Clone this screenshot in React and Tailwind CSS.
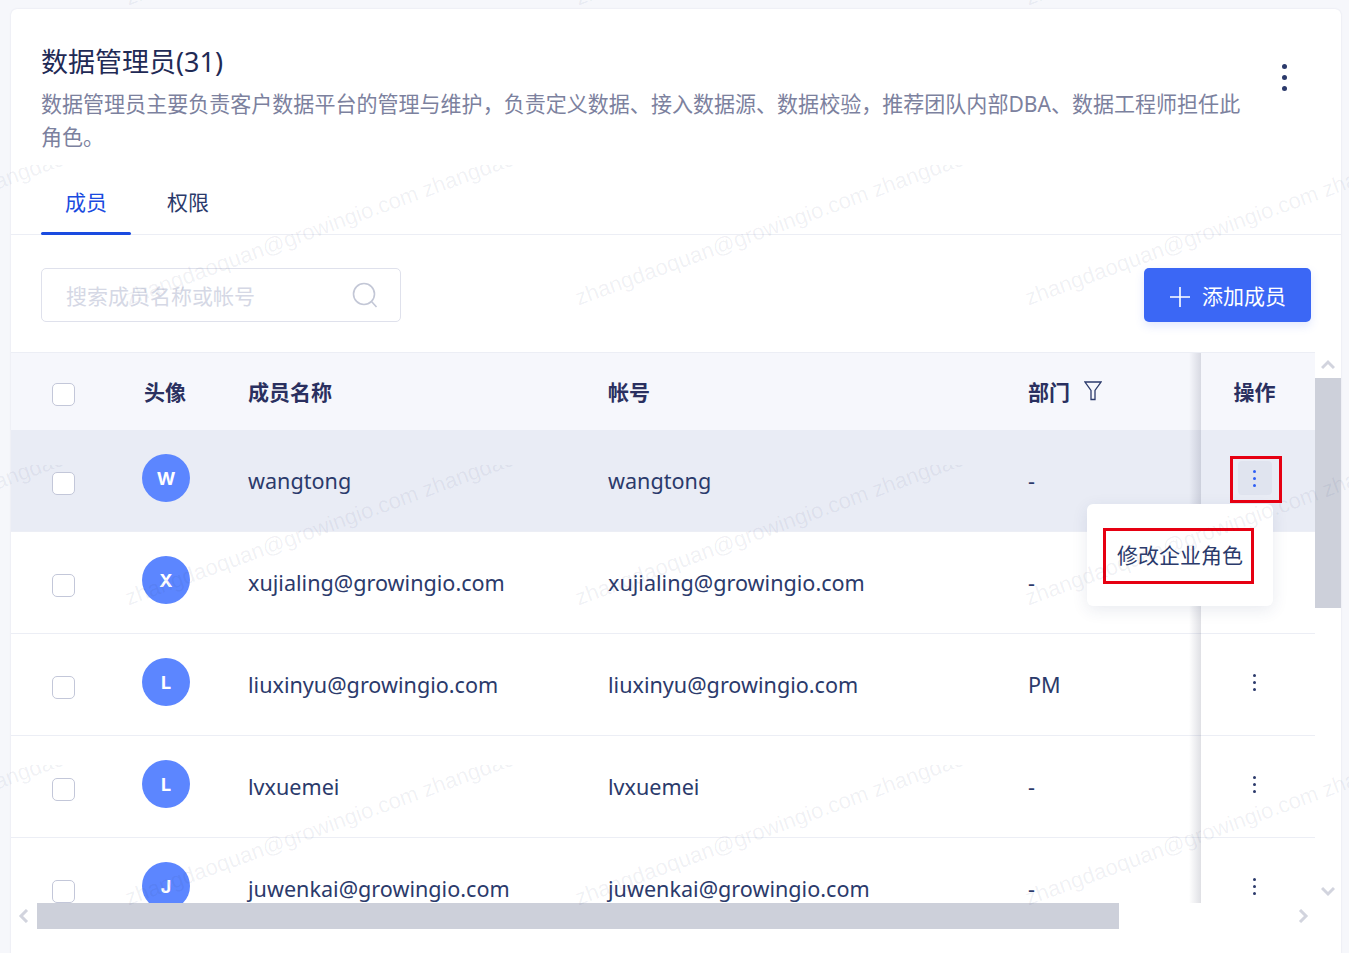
const members = [
  { letter: "W", name: "wangtong", account: "wangtong", dept: "-" },
  { letter: "X", name: "xujialing@growingio.com", account: "xujialing@growingio.com", dept: "-" },
  { letter: "L", name: "liuxinyu@growingio.com", account: "liuxinyu@growingio.com", dept: "PM" },
  { letter: "L", name: "lvxuemei", account: "lvxuemei", dept: "-" },
  { letter: "J", name: "juwenkai@growingio.com", account: "juwenkai@growingio.com", dept: "-" },
];

function Checkbox() {
  return <span className="block h-[23px] w-[23px] rounded-[5px] border-[1.5px] border-[#c3c7d9] bg-white" />;
}

function Dots({ className, size = "h-[3px] w-[3px]", gap = "gap-1" }) {
  return (
    <span className={`flex flex-col items-center ${gap}`}>
      <i className={`block rounded-full ${size} ${className}`} />
      <i className={`block rounded-full ${size} ${className}`} />
      <i className={`block rounded-full ${size} ${className}`} />
    </span>
  );
}

function Chevron({ points, className }) {
  return (
    <svg viewBox="0 0 14 14" className={`h-[14px] w-[14px] ${className}`} fill="none" stroke="#d2d4de" strokeWidth="3">
      <polyline points={points} />
    </svg>
  );
}

// Tiled account name that sits faintly over the whole page
function Watermark() {
  const tiles = Array.from({ length: 16 });
  return (
    <div className="pointer-events-none absolute left-[-375px] top-[-135px] z-50 flex w-[1800px] flex-wrap">
      {tiles.map((_, i) => (
        <div key={i} className="relative h-[300px] w-[450px] overflow-hidden">
          <span className="absolute left-[56px] top-[119px] origin-bottom-left -rotate-[20deg] whitespace-nowrap text-[22px] leading-[28px] text-[#2b3a6b]/[0.07] [font-family:'Liberation_Sans',sans-serif]">
            zhangdaoquan@growingio.com zhangdaoquan@growingio.com
          </span>
        </div>
      ))}
    </div>
  );
}

export default function App() {
  return (
    <div className="relative h-[953px] w-[1349px] overflow-hidden bg-[#f6f7fb] pl-[11px] pt-[9px] text-[#2b3a6b] [font-family:'Noto_Sans','Noto_Sans_CJK_SC',sans-serif]">
      <div className="relative h-[960px] w-[1330px] rounded-t-[6px] bg-white shadow-[0_0_2px_rgba(43,58,107,0.12)]">
        {/* Title and description */}
        <div className="flex justify-between pl-[30px] pr-[54px] pt-[35px]">
          <div className="w-[1205px]">
            <h1 className="text-[27px] leading-[36px] text-[#1f2a55]">数据管理员(31)</h1>
            <p className="mt-[8px] text-[21.04px] leading-[33px] text-[#7c819e]">
              数据管理员主要负责客户数据平台的管理与维护，负责定义数据、接入数据源、数据校验，推荐团队内部DBA、数据工程师担任此角色。
            </p>
          </div>
          <div className="pt-[20px]">
            <Dots className="bg-[#2b3a6b]" size="h-[5px] w-[5px]" gap="gap-[6px]" />
          </div>
        </div>

        {/* Tabs */}
        <div className="mt-[18px] flex h-[63px] gap-3 border-b border-[#eceef5] pl-[30px] text-[21px]">
          <div className="relative flex w-[90px] items-center justify-center pb-px text-[#1a4be0]">
            成员
            <span className="absolute inset-x-0 bottom-[-1px] h-[3px] rounded-[2px] bg-[#1a4be0]" />
          </div>
          <div className="flex w-[90px] items-center justify-center pb-px text-[#2b3a6b]">权限</div>
        </div>

        {/* Toolbar */}
        <div className="flex items-center justify-between px-[30px] pb-[30px] pt-[33px]">
          <div className="flex h-[54px] w-[360px] items-center justify-between rounded-[5px] border border-[#dfe1ec] pl-6 pr-[22px]">
            <span className="pt-[4px] text-[21px] text-[#d5d8e5]">搜索成员名称或帐号</span>
            <svg viewBox="0 0 26 26" className="h-[26px] w-[26px]" fill="none" stroke="#c3c7d6" strokeWidth="1.6">
              <circle cx="12" cy="12" r="10.5" />
              <path d="M19.5 19.5 L24.5 25" />
            </svg>
          </div>
          <button className="flex h-[54px] w-[167px] items-center rounded-[5px] bg-[#3b67f5] pl-[25px] pt-[4px] text-[21px] text-white shadow-[0_4px_10px_rgba(59,103,245,0.15)]">
            <svg viewBox="0 0 22 22" className="mr-[11px] h-[22px] w-[22px]" fill="none" stroke="#fff" strokeWidth="1.6">
              <path d="M11 1 V21 M1 11 H21" />
            </svg>
            添加成员
          </button>
        </div>

        {/* Table with its scrollbars */}
        <div className="flex">
          <div className="relative h-[551px] w-[1304px] overflow-hidden">
            <div className="flex h-[78px] items-center border-t border-[#eceef5] bg-[#f6f7fc] text-[21px] font-bold text-[#2a3060]">
              <div className="mt-[6px] w-[133px] pl-[41px]"><Checkbox /></div>
              <div className="mt-[3px] w-[104px]">头像</div>
              <div className="mt-[3px] w-[360px]">成员名称</div>
              <div className="mt-[3px] w-[420px]">帐号</div>
              <div className="mt-[3px] flex w-[172px] items-center gap-[14px]">
                部门
                <svg viewBox="0 0 18 20" className="mb-1 h-5 w-[18px]" fill="none" stroke="#2b3a6b" strokeWidth="1.3">
                  <path d="M1 1 H17 L11 9.5 V18.5 H7 V9.5 Z" />
                </svg>
              </div>
              <div className="flex h-full w-[115px] items-center justify-center pr-[6px] pt-[3px]">操作</div>
            </div>

            {members.map((m, i) => (
              <div key={i} className={`flex h-[102px] items-center border-b border-[#eceef5] text-[21.6px] ${i === 0 ? "bg-[#e9ecf5]" : "bg-white"}`}>
                <div className="mt-[5px] w-[133px] pl-[41px]"><Checkbox /></div>
                <div className="w-[104px]">
                  <div className="-ml-[2px] -mt-[5px] flex h-12 w-12 items-center justify-center rounded-full bg-[#5c86ff] text-[18px] font-bold text-white [font-family:'Inter',sans-serif]">
                    {m.letter}
                  </div>
                </div>
                <div className="mt-[2px] w-[360px]">{m.name}</div>
                <div className="mt-[2px] w-[420px]">{m.account}</div>
                <div className="mt-[2px] w-[172px]">{m.dept}</div>
                <div className="flex h-full w-[115px] items-center justify-center pr-[6px]">
                  {i === 0 ? (
                    <span className="-mt-[5px] flex h-[34px] w-[34px] items-center justify-center rounded-[4px] bg-[#e0e4ef]">
                      <Dots className="bg-[#2f5ff5]" />
                    </span>
                  ) : (
                    <span className="-mt-[5px]"><Dots className="bg-[#2b3a6b]" /></span>
                  )}
                </div>
              </div>
            ))}

            {/* Shadow cast by the pinned action column */}
            <div className="absolute bottom-0 left-[1178px] top-px w-[12px] bg-gradient-to-r from-transparent to-[#2b3050]/15" />
          </div>

          <div className="flex h-[551px] w-[26px] flex-col items-center">
            <div className="flex h-[26px] items-center justify-center"><Chevron points="1,10 7,4 13,10" /></div>
            <div className="h-[230px] w-full bg-[#cdd0da]" />
            <div className="flex-1" />
            <div className="flex h-[25px] items-center justify-center"><Chevron points="1,4 7,10 13,4" /></div>
          </div>
        </div>

        <div className="flex h-[26px] items-center">
          <div className="flex w-[26px] justify-center"><Chevron points="10,1 4,7 10,13" /></div>
          <div className="h-full w-[1082px] bg-[#cdd0da]" />
          <div className="flex-1" />
          <div className="mr-[31px]"><Chevron points="4,1 10,7 4,13" /></div>
        </div>

        {/* Row action menu */}
        <div className="absolute left-[1076px] top-[495px] z-20 flex h-[102px] w-[186px] items-center rounded-[6px] bg-white pl-[30px] pt-[2px] text-[21px] text-[#2b3a6b] shadow-[0_4px_16px_rgba(43,58,107,0.1)]">
          修改企业角色
        </div>

        {/* Red callouts around the action button and the menu item */}
        <div className="absolute left-[1219px] top-[447px] z-30 h-[47px] w-[52px] border-[3px] border-[#e60012]" />
        <div className="absolute left-[1092px] top-[519px] z-30 h-[56px] w-[151px] border-[3px] border-[#e60012]" />
      </div>
      <Watermark />
    </div>
  );
}
